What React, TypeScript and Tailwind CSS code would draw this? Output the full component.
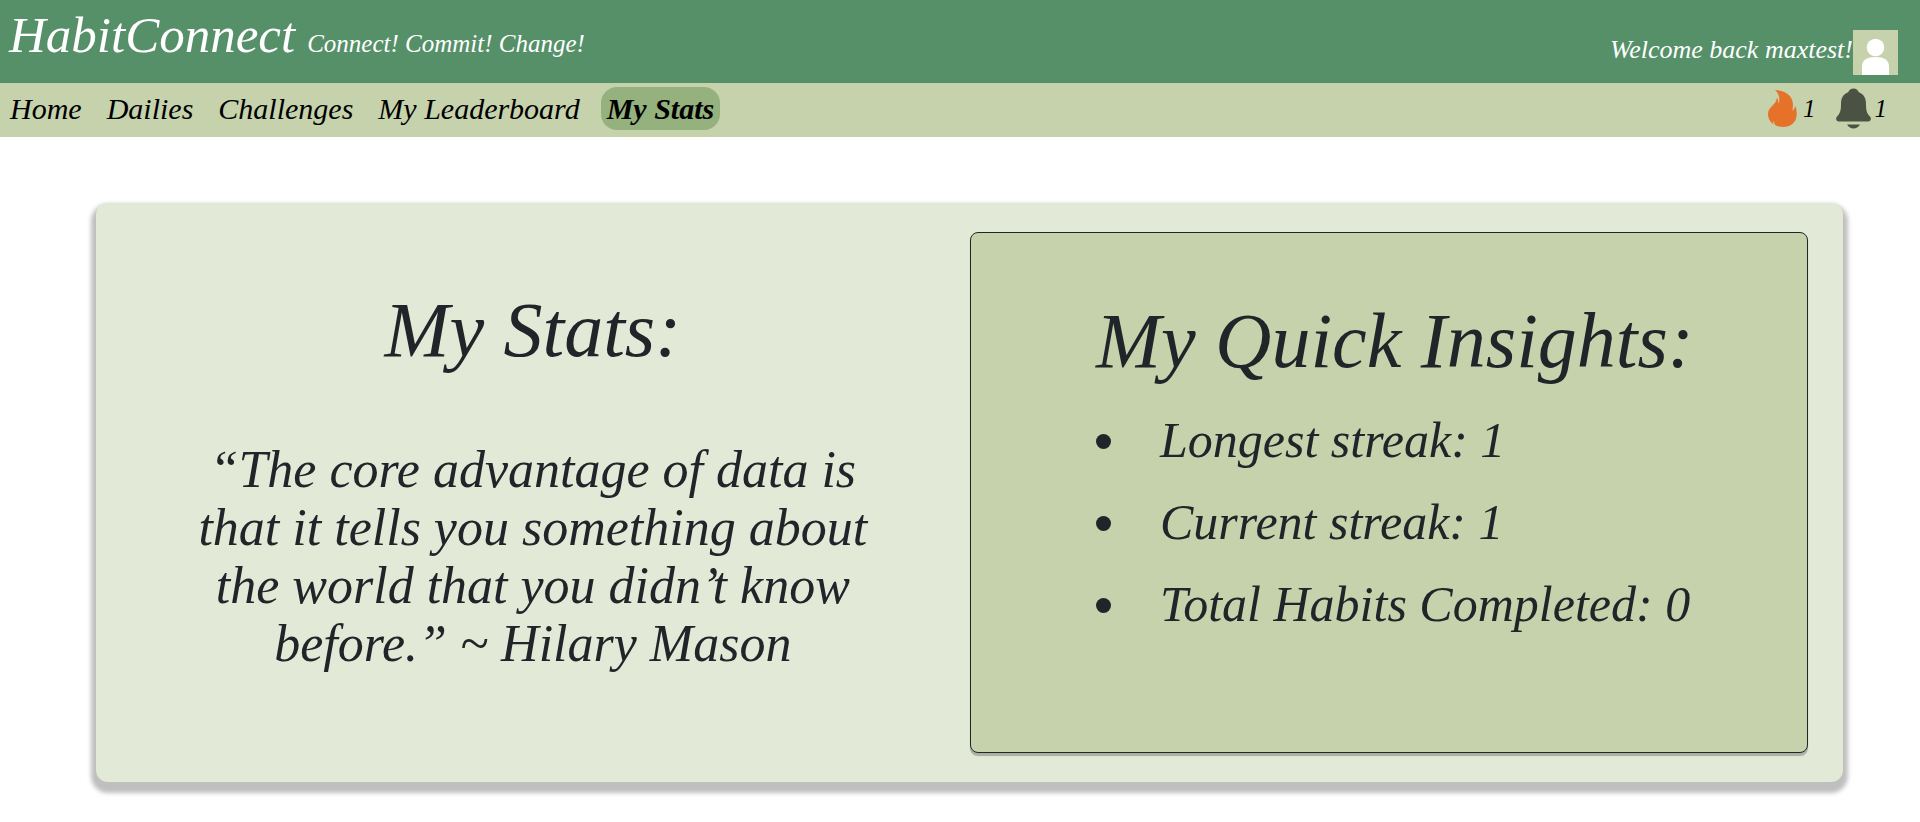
const links = ["Home", "Dailies", "Challenges", "My Leaderboard", "My Stats"];

const insights = [
  { label: "Longest streak", value: 1 },
  { label: "Current streak", value: 1 },
  { label: "Total Habits Completed", value: 0 },
];

function Avatar() {
  return (
    <svg viewBox="0 0 45 45" className="size-[45px] bg-[#c5d2ac]" role="img" aria-label="Profile">
      <circle cx="22.5" cy="17.5" r="8.8" fill="#fff" />
      <path d="M9 45V36.5C9 30 14 27 22.5 27S36 30 36 36.5V45Z" fill="#fff" />
    </svg>
  );
}

function Flame() {
  return (
    <svg viewBox="0 0 29 37" className="h-[37px] w-[29px]" aria-hidden="true">
      <path
        fill="#e67229"
        d="M7 0C18 .5 25 7 25 14.500C25 17 24.500 19 24.600 21C26 19.500 27 17.500 27 15.500C28.500 19 29 22 28.500 26C28 32.500 22.500 37 15 37C12 37 9.500 36.500 7.200 35C6.300 33.500 6 32 6 30.500C5.200 31.500 5.200 33 5.600 34.300C1.500 31.500 0 27.500 0 24C0 16.500 8.500 15 9 7.500C10.300 9.500 10.400 11.500 10.200 14C12.500 10 11.500 4 7 0Z"
      />
    </svg>
  );
}

function Bell() {
  return (
    <svg viewBox="0 0 35 41" className="h-[41px] w-[35px]" aria-hidden="true">
      <path
        fill="#4c5243"
        d="M17.500 .5C20 .5 22 2 22.800 4.300C27.500 6 30 10 30 16C30 23 31 25.500 34 28.500C36 31 34.500 33.500 32 33.500H3C.5 33.500-1 31 1 28.500C4 25.500 5 23 5 16C5 10 7.500 6 12.200 4.300C13 2 15 .5 17.500 .5ZM11 36.500H24C22.500 39 20 40.500 17.500 40.500S12.500 39 11 36.500Z"
      />
    </svg>
  );
}

export default function App() {
  return (
    <div className="font-['Liberation_Serif',serif] text-[#212529] italic">
      <header className="flex h-[83px] items-start justify-between bg-[#559068] pr-[22px] pl-[9px] text-white">
        <div className="flex items-baseline gap-3 pt-[7px]">
          <h1 className="text-[51px] leading-[56px]">HabitConnect</h1>
          <p className="text-[25px]">Connect! Commit! Change!</p>
        </div>
        <div className="flex items-start pt-[30px]">
          <span className="text-[26px] leading-[40px]">Welcome back maxtest!</span>
          <Avatar />
        </div>
      </header>

      <nav className="flex h-[54px] items-center justify-between bg-[#c5d2ac] pr-[33px] pb-[3px] pl-[6px] text-black">
        <ul className="flex gap-[17px] text-[30px] leading-[43px]">
          {links.map((link) => (
            <li key={link}>
              <a
                href="#"
                aria-current={link === "My Stats" ? "page" : undefined}
                className={
                  link === "My Stats"
                    ? "block rounded-2xl bg-[#94b17e] px-[6px] font-bold"
                    : "block px-1"
                }
              >
                {link}
              </a>
            </li>
          ))}
        </ul>
        <div className="flex items-center gap-5 text-[25px] leading-[40px]">
          <a href="#" aria-label="Streak: 1" className="flex items-center gap-1.5">
            <Flame />1
          </a>
          <a href="#" aria-label="Notifications: 1" className="flex items-center gap-1">
            <Bell />1
          </a>
        </div>
      </nav>

      <main className="mr-[4%] ml-[5%] pt-[66px] pb-10">
        <div className="grid grid-cols-2 rounded-xl bg-[#e2e9d7] py-[29px] shadow-[0_6px_4px_5px_#bfbfbf]">
          <section className="flex flex-col items-center px-[90px] pt-[52px] text-center">
            <h2 className="text-[78px] leading-[92px]">My Stats:</h2>
            <p className="mt-[65px] text-[52px] leading-[58px]">
              “The core advantage of data is that it tells you something about the world that you
              didn’t know before.” ~ Hilary Mason
            </p>
          </section>
          <section className="mr-[4%] flex h-[521px] flex-col items-center rounded-lg border border-[#212529] bg-[#c5d2ac] pt-[62px] shadow-[0_3px_1px_0_#a9afa1]">
            <div className="pl-3">
              <h2 className="text-[78px] leading-[92px]">My Quick Insights:</h2>
              <ul className="mt-3 list-disc pl-[37px] text-[50px] leading-[82px]">
                {insights.map((item) => (
                  <li key={item.label} className="pl-[27px]">
                    {item.label}: {item.value}
                  </li>
                ))}
              </ul>
            </div>
          </section>
        </div>
      </main>
    </div>
  );
}
